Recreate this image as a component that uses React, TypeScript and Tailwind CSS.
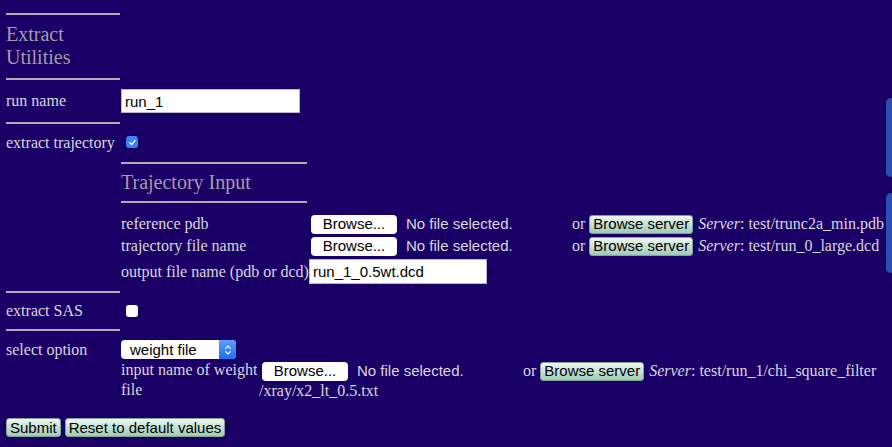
import type { ReactNode } from "react";

const Rule = ({ w = "w-[114px]" }: { w?: string }) => (
  <div className={`h-[2px] ${w} bg-[#b3abb3]`} />
);

const Checkbox = ({ checked }: { checked?: boolean }) =>
  checked ? (
    <span className="flex h-[12px] w-[12px] items-center justify-center rounded-[3px] bg-[#3b82f6]">
      <svg viewBox="0 0 12 12" className="h-[9px] w-[9px]">
        <path d="M2.5 6.2 L5 8.6 L9.5 3.2" fill="none" stroke="#fff" strokeWidth="1.8" strokeLinecap="round" strokeLinejoin="round" />
      </svg>
    </span>
  ) : (
    <span className="block h-[12px] w-[12px] rounded-[3px] bg-white" />
  );

const BrowseButton = () => (
  <span className="inline-flex h-[19px] w-[86px] items-center justify-center rounded-[4px] bg-white font-['Liberation_Sans',sans-serif] text-[15px] text-black">
    Browse...
  </span>
);

const GreenButton = ({ children }: { children: ReactNode }) => (
  <span className="inline-flex h-[19px] items-center rounded-[3px] border border-[#7fa394] bg-gradient-to-b from-[#eef8f2] to-[#9fcab6] px-[3px] font-['Liberation_Sans',sans-serif] text-[15px] text-black">
    {children}
  </span>
);

const FileInput = () => (
  <div className="flex w-[261px] items-center">
    <BrowseButton />
    <span className="ml-[9px] font-['Liberation_Sans',sans-serif] text-[15px]">No file selected.</span>
  </div>
);

const ServerPick = ({ path }: { path: string }) => (
  <div className="flex items-center">
    <span>or</span>
    <span className="ml-[4px] flex">
      <GreenButton>Browse server</GreenButton>
    </span>
    <span className="ml-[5px]">
      <i>Server</i>: {path}
    </span>
  </div>
);

export default function App() {
  return (
    <div className="relative min-h-screen w-full overflow-hidden bg-[#1a0066] pl-[6px] pt-[13px] font-['Liberation_Serif',serif] text-[16px] leading-[18px] text-[#dcd6dc]">
      {/* side tabs */}
      <div className="absolute right-0 top-[98px] h-[79px] w-[6px] rounded-l-[5px] bg-[#2b4fb3]" />
      <div className="absolute right-0 top-[193px] h-[80px] w-[6px] rounded-l-[5px] bg-[#2b4fb3]" />

      <Rule />
      <div className="pb-[9px] pt-[8px] text-[20px] leading-[23px] text-[#a59ca5]">
        Extract
        <br />
        Utilities
      </div>
      <Rule />

      {/* run name */}
      <div className="flex items-center py-[9px]">
        <div className="w-[115px]">run name</div>
        <input
          readOnly
          value="run_1"
          className="h-[24px] w-[179px] border border-[#b9b9c9] bg-white px-[3px] font-['Liberation_Sans',sans-serif] text-[15px] text-black outline-none"
        />
      </div>
      <Rule />

      {/* extract trajectory */}
      <div className="flex pt-[10px]">
        <div className="w-[115px]">extract trajectory</div>
        <div className="flex flex-col">
          <div className="ml-[5px] mt-[2px] flex h-[12px]">
            <Checkbox checked />
          </div>
          <div className="mt-[14px]">
            <Rule w="w-[186px]" />
          </div>
          <div className="py-[9px] text-[20px] leading-[19px] text-[#a59ca5]">Trajectory Input</div>
          <Rule w="w-[186px]" />
          <div className="mt-[10px] flex h-[22px] items-center">
            <div className="w-[190px]">reference pdb</div>
            <FileInput />
            <ServerPick path="test/trunc2a_min.pdb" />
          </div>
          <div className="flex h-[22px] items-center">
            <div className="w-[190px]">trajectory file name</div>
            <FileInput />
            <ServerPick path="test/run_0_large.dcd" />
          </div>
          <div className="mt-[1px] flex h-[27px] items-center">
            <div className="w-[188px]">output file name (pdb or dcd)</div>
            <input
              readOnly
              value="run_1_0.5wt.dcd"
              className="h-[25px] w-[178px] border border-[#b9b9c9] bg-white px-[3px] font-['Liberation_Sans',sans-serif] text-[15px] text-black outline-none"
            />
          </div>
        </div>
      </div>

      <div className="mt-[6px]">
        <Rule />
      </div>

      {/* extract SAS */}
      <div className="flex items-center py-[9px]">
        <div className="w-[115px]">extract SAS</div>
        <div className="ml-[5px] flex h-[12px]">
          <Checkbox />
        </div>
      </div>
      <Rule />

      {/* select option */}
      <div className="flex pt-[9px]">
        <div className="w-[115px] pt-[1px]">select option</div>
        <div className="flex flex-col">
          <div className="flex h-[19px] w-[115px] items-center overflow-hidden rounded-[4px] bg-white">
            <span className="flex-1 pl-[9px] font-['Liberation_Sans',sans-serif] text-[15px] text-black">weight file</span>
            <span className="flex h-full w-[17px] items-center justify-center bg-gradient-to-b from-[#5aa0ff] to-[#1f6fef]">
              <svg viewBox="0 0 10 14" className="h-[12px] w-[8px]">
                <path d="M2 5 L5 2 L8 5 M2 9 L5 12 L8 9" fill="none" stroke="#fff" strokeWidth="1.4" strokeLinecap="round" strokeLinejoin="round" />
              </svg>
            </span>
          </div>
          <div className="mt-[1px] flex items-start">
            <div className="w-[138px] leading-[20px]">input name of weight file</div>
            <div className="flex flex-col">
              <div className="flex h-[22px] items-center">
                <div className="ml-[3px]">
                  <FileInput />
                </div>
                <ServerPick path="test/run_1/chi_square_filter" />
              </div>
              <div className="leading-[18px]">/xray/x2_lt_0.5.txt</div>
            </div>
          </div>
        </div>
      </div>

      {/* actions */}
      <div className="mt-[18px] flex gap-[4px]">
        <GreenButton>Submit</GreenButton>
        <GreenButton>Reset to default values</GreenButton>
      </div>
    </div>
  );
}
